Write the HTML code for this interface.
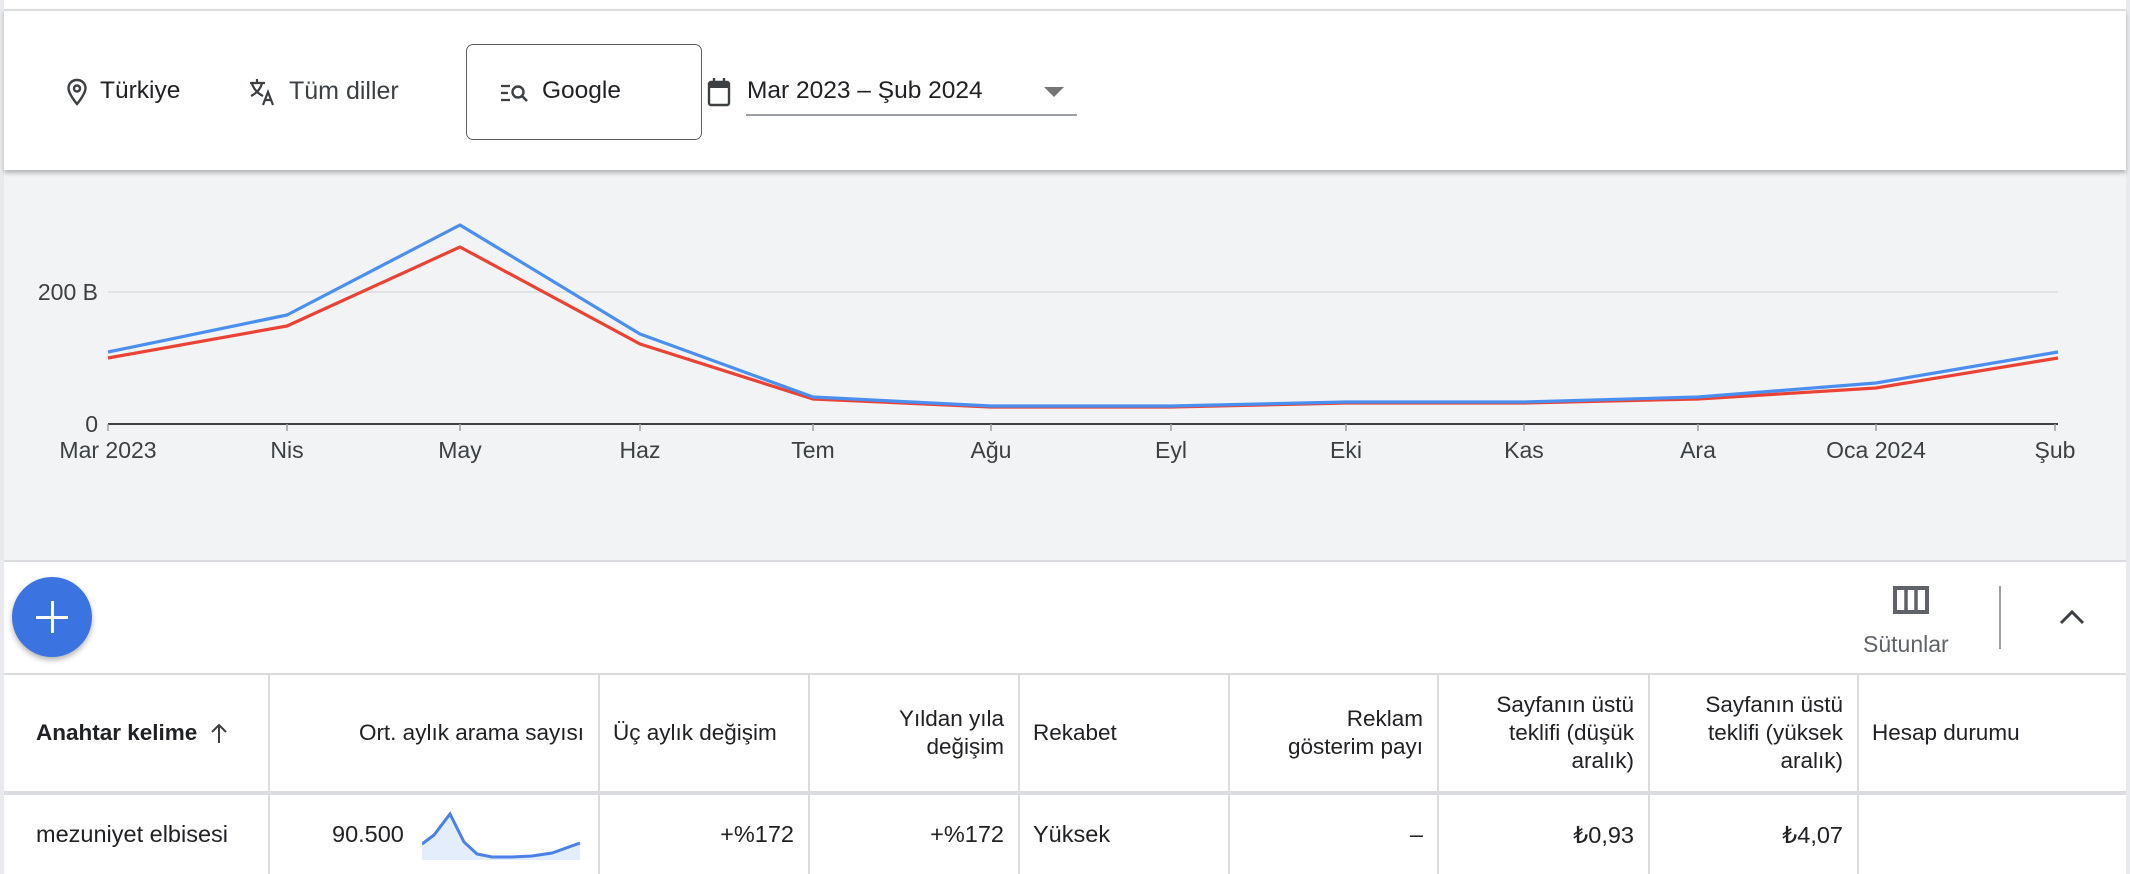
<!DOCTYPE html>
<html><head><meta charset="utf-8"><style>
*{margin:0;padding:0;box-sizing:border-box}
body{width:2130px;height:874px;background:#fff;font-family:"Liberation Sans",Arial,sans-serif;color:#202124;position:relative;overflow:hidden}
.abs{position:absolute}
.t{position:absolute;font-size:24.5px;color:#3c4043;white-space:nowrap}
.hdr{position:absolute;left:4px;width:2122px;background:#fff;border-top:2px solid #dadce0;top:9px;height:161px;box-shadow:0 3px 4px rgba(0,0,0,.25);z-index:2}
.chart{position:absolute;left:4px;top:170px;width:2122px;height:390px;background:#f1f3f4}
.th{position:absolute;top:674px;height:118px;display:flex;align-items:center;font-size:22.5px;line-height:28px;color:#202124;padding:0 14px}
.td{position:absolute;top:795px;height:79px;display:flex;align-items:center;font-size:23.5px;color:#202124;padding:0 14px}
.r{justify-content:flex-end;text-align:right}
.vl{position:absolute;top:674px;height:200px;width:1.5px;background:#dadce0}
</style></head><body>
<div class="abs" style="left:0;top:0;width:4px;height:874px;background:#e8eaed"></div>
<div class="abs" style="left:2126px;top:0;width:4px;height:874px;background:#e8eaed"></div>
<div class="hdr">
 <svg class="abs" style="left:62px;top:67px" width="22" height="28" viewBox="0 0 22 28"><path d="M11 2C6 2 2.5 5.6 2.5 10.3 2.5 16 11 26 11 26s8.5-10 8.5-15.7C19.5 5.6 16 2 11 2z" fill="none" stroke="#3c4043" stroke-width="2.4"/><circle cx="11" cy="10.5" r="3" fill="none" stroke="#3c4043" stroke-width="2.4"/></svg>
 <div class="t" style="left:96px;top:66px;color:#202124">Türkiye</div>
 <svg class="abs" style="left:244px;top:66px" width="30" height="30" viewBox="0 0 30 30"><path d="M2 6h15M9 2v4M4 6c1 5 5 10 11 13M14 6c-1 5-5 10-11 13" fill="none" stroke="#3c4043" stroke-width="2.2"/><path d="M15 28l5-13 5 13M17 23h6" fill="none" stroke="#3c4043" stroke-width="2.2"/></svg>
 <div class="t" style="left:285px;top:66px;font-size:25px">Tüm diller</div>
 <div class="abs" style="left:462px;top:33px;width:236px;height:96px;border:1.5px solid #5f6368;border-radius:7px"></div>
 <svg class="abs" style="left:496px;top:72px" width="30" height="22" viewBox="0 0 30 22"><path d="M1 3h9M1 10h7M1 17h9" stroke="#3c4043" stroke-width="2.2"/><circle cx="18" cy="9" r="5.5" fill="none" stroke="#3c4043" stroke-width="2.4"/><path d="M22 13l5 5" stroke="#3c4043" stroke-width="2.6"/></svg>
 <div class="t" style="left:538px;top:66px;color:#202124">Google</div>
 <svg class="abs" style="left:703px;top:66px" width="24" height="30" viewBox="0 0 24 30"><rect x="2" y="5" width="20" height="23" rx="2" fill="none" stroke="#3c4043" stroke-width="2.4"/><rect x="2" y="5" width="20" height="6" fill="#3c4043"/><path d="M7 1v6M17 1v6" stroke="#3c4043" stroke-width="2.4"/></svg>
 <div class="t" style="left:743px;top:66px;color:#202124">Mar 2023 – Şub 2024</div>
 <div class="abs" style="left:1040px;top:76px;width:0;height:0;border-left:10px solid transparent;border-right:10px solid transparent;border-top:10px solid #757575"></div>
 <div class="abs" style="left:742px;top:103px;width:331px;height:1.5px;background:#9aa0a6"></div>
</div>
<div class="chart"></div>
<svg class="abs" style="left:0;top:170px" width="2130" height="390" viewBox="0 170 2130 390">
 <line x1="108" y1="292" x2="2058" y2="292" stroke="#dadce0" stroke-width="1.5"/>
 <text x="98" y="300" text-anchor="end" font-family="Liberation Sans" font-size="23" fill="#3c4043">200 B</text>
 <text x="98" y="432" text-anchor="end" font-family="Liberation Sans" font-size="23" fill="#3c4043">0</text>
 <line x1="108" y1="424" x2="2058" y2="424" stroke="#3c4043" stroke-width="2"/>
 <g stroke="#9aa0a6" stroke-width="1.5">
 <line x1="108" y1="424" x2="108" y2="431"/><line x1="287" y1="424" x2="287" y2="431"/><line x1="460" y1="424" x2="460" y2="431"/><line x1="640" y1="424" x2="640" y2="431"/><line x1="813" y1="424" x2="813" y2="431"/><line x1="991" y1="424" x2="991" y2="431"/><line x1="1171" y1="424" x2="1171" y2="431"/><line x1="1346" y1="424" x2="1346" y2="431"/><line x1="1524" y1="424" x2="1524" y2="431"/><line x1="1698" y1="424" x2="1698" y2="431"/><line x1="1876" y1="424" x2="1876" y2="431"/><line x1="2055" y1="424" x2="2055" y2="431"/></g>
 <g font-family="Liberation Sans" font-size="23" fill="#3c4043" text-anchor="middle">
 <text x="108" y="458">Mar 2023</text><text x="287" y="458">Nis</text><text x="460" y="458">May</text><text x="640" y="458">Haz</text><text x="813" y="458">Tem</text><text x="991" y="458">Ağu</text><text x="1171" y="458">Eyl</text><text x="1346" y="458">Eki</text><text x="1524" y="458">Kas</text><text x="1698" y="458">Ara</text><text x="1876" y="458">Oca 2024</text><text x="2055" y="458">Şub</text></g>
 <polyline fill="none" stroke="#ea4335" stroke-width="3.2" stroke-linejoin="round" points="108,358 287,326 460,247 640,344 813,399 991,407 1171,407 1346,403 1524,403 1698,399 1876,388 2058,358"/>
 <polyline fill="none" stroke="#4a8ff0" stroke-width="3.2" stroke-linejoin="round" points="108,352 287,315 460,225 640,334 813,397 991,406 1171,406 1346,402 1524,402 1698,397 1876,383 2058,352"/>
</svg>
<div class="abs" style="left:4px;top:560px;width:2122px;height:1.5px;background:#dadce0"></div>
<div class="abs" style="left:12px;top:577px;width:80px;height:80px;border-radius:50%;background:#3b73e0;box-shadow:0 3px 6px rgba(0,0,0,.3)"></div>
<div class="abs" style="left:36px;top:616px;width:32px;height:3px;background:#fff"></div>
<div class="abs" style="left:50.5px;top:601px;width:3px;height:32px;background:#fff"></div>
<svg class="abs" style="left:1893px;top:586px" width="36" height="28" viewBox="0 0 36 28"><rect x="2" y="2" width="32" height="24" fill="none" stroke="#5f6368" stroke-width="4"/><path d="M13 1v26M23 1v26" stroke="#5f6368" stroke-width="3.5"/></svg>
<div class="t" style="left:1863px;top:631px;font-size:23px;color:#5f6368">Sütunlar</div>
<div class="abs" style="left:1999px;top:586px;width:1.5px;height:63px;background:#9aa0a6"></div>
<svg class="abs" style="left:2058px;top:608px" width="28" height="18" viewBox="0 0 28 18"><path d="M3 15L14 4l11 11" fill="none" stroke="#3c4043" stroke-width="3"/></svg>
<div class="abs" style="left:4px;top:673px;width:2122px;height:2px;background:#dadce0"></div>
<div class="abs" style="left:4px;top:791px;width:2122px;height:4px;background:#dadce0"></div>
<div class="vl" style="left:268px"></div><div class="vl" style="left:598px"></div><div class="vl" style="left:808px"></div><div class="vl" style="left:1018px"></div><div class="vl" style="left:1228px"></div><div class="vl" style="left:1437px"></div><div class="vl" style="left:1648px"></div><div class="vl" style="left:1857px"></div>
<div class="th" style="left:22px;width:246px;font-weight:bold">Anahtar kelime<svg style="margin-left:12px" width="20" height="22" viewBox="0 0 20 22"><path d="M10 21V3M3 10l7-7 7 7" fill="none" stroke="#3c4043" stroke-width="2"/></svg></div>
<div class="th r" style="left:269px;width:329px">Ort. aylık arama sayısı</div>
<div class="th" style="left:599px;width:209px">Üç aylık değişim</div>
<div class="th r" style="left:809px;width:209px">Yıldan yıla<br>değişim</div>
<div class="th" style="left:1019px;width:209px">Rekabet</div>
<div class="th r" style="left:1229px;width:208px">Reklam<br>gösterim payı</div>
<div class="th r" style="left:1438px;width:210px">Sayfanın üstü<br>teklifi (düşük<br>aralık)</div>
<div class="th r" style="left:1649px;width:208px">Sayfanın üstü<br>teklifi (yüksek<br>aralık)</div>
<div class="th" style="left:1858px;width:268px">Hesap durumu</div>
<div class="td" style="left:22px;width:246px">mezuniyet elbisesi</div>
<div class="td" style="left:318px;width:100px">90.500</div>
<svg class="abs" style="left:422px;top:808px" width="160" height="54" viewBox="0 0 160 54"><path d="M0 36L12 27 28 6 42 34 55 46 70 49 90 49 110 48 130 45 158 35V52H0z" fill="#e3edfb"/><polyline points="0,36 12,27 28,6 42,34 55,46 70,49 90,49 110,48 130,45 158,35" fill="none" stroke="#4a80e8" stroke-width="3"/></svg>
<div class="td r" style="left:599px;width:209px">+%172</div>
<div class="td r" style="left:809px;width:209px">+%172</div>
<div class="td" style="left:1019px;width:209px">Yüksek</div>
<div class="td r" style="left:1229px;width:208px">–</div>
<div class="td r" style="left:1438px;width:210px">₺0,93</div>
<div class="td r" style="left:1649px;width:208px">₺4,07</div>
</body></html>
